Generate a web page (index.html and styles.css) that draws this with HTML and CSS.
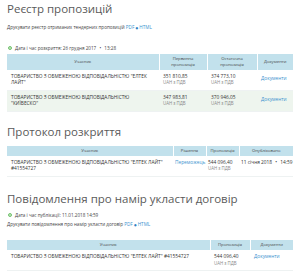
FILE: index.html
```html
<!DOCTYPE html>
<html lang="uk">
<head>
<meta charset="utf-8">
<link rel="stylesheet" href="styles.css">
</head>
<body>
<main class="page">
  <section class="block block-register">
    <h2 class="title">Реєстр пропозицій</h2>
    <p class="print">Друкувати реєстр отриманих тендерних пропозицій <a class="link" href="#">PDF</a> <span class="sep">●</span> <a class="link" href="#">HTML</a></p>
    <p class="date"><span class="status"></span>Дата і час розкриття: 26 грудня 2017 <span class="bull">•</span> 13:28</p>
    <table class="grid grid-register">
      <colgroup><col class="c1"><col class="c2"><col class="c3"><col class="c4"></colgroup>
      <thead>
        <tr><th>Учасник</th><th>Первинна<br>пропозиція</th><th>Остаточна<br>пропозиція</th><th>Документи</th></tr>
      </thead>
      <tbody>
        <tr>
          <td>ТОВАРИСТВО З ОБМЕЖЕНОЮ ВІДПОВІДАЛЬНІСТЮ "ЕЛТЕК ЛАЙТ"</td>
          <td>351 810,85<span class="vat">UAH з ПДВ</span></td>
          <td>374 773,10<span class="vat">UAH з ПДВ</span></td>
          <td class="mid"><a class="link" href="#">Документи</a></td>
        </tr>
        <tr class="alt">
          <td>ТОВАРИСТВО З ОБМЕЖЕНОЮ ВІДПОВІДАЛЬНІСТЮ "КИЇВЕСКО"</td>
          <td>347 983,81<span class="vat">UAH з ПДВ</span></td>
          <td>370 946,05<span class="vat">UAH з ПДВ</span></td>
          <td class="mid"><a class="link" href="#">Документи</a></td>
        </tr>
      </tbody>
    </table>
  </section>

  <section class="block block-protocol">
    <h2 class="title">Протокол розкриття</h2>
    <table class="grid grid-protocol">
      <colgroup><col class="c1"><col class="c2"><col class="c3"><col class="c4"></colgroup>
      <thead>
        <tr><th>Учасник</th><th>Рішення</th><th>Пропозиція</th><th>Опубліковано</th></tr>
      </thead>
      <tbody>
        <tr>
          <td>ТОВАРИСТВО З ОБМЕЖЕНОЮ ВІДПОВІДАЛЬНІСТЮ "ЕЛТЕК ЛАЙТ" #41554727</td>
          <td class="tight"><a class="link" href="#">Переможець</a></td>
          <td class="tight">544 096,40<span class="vat">UAH з ПДВ</span></td>
          <td class="tight nowrap">11 січня 2018 <span class="bull">•</span> 14:59</td>
        </tr>
      </tbody>
    </table>
  </section>

  <section class="block block-notice">
    <h2 class="title">Повідомлення про намір укласти договір</h2>
    <p class="date"><span class="status"></span>Дата і час публікації: 11.01.2018 14:59</p>
    <p class="print">Друкувати повідомлення про намір укласти договір <a class="link" href="#">PDF</a> <span class="sep">●</span> <a class="link" href="#">HTML</a></p>
    <table class="grid grid-notice">
      <colgroup><col class="c1"><col class="c2"><col class="c3"></colgroup>
      <thead>
        <tr><th>Учасник</th><th>Пропозиція</th><th>Документи</th></tr>
      </thead>
      <tbody>
        <tr>
          <td>ТОВАРИСТВО З ОБМЕЖЕНОЮ ВІДПОВІДАЛЬНІСТЮ "ЕЛТЕК ЛАЙТ" #41554727</td>
          <td>544 096,40<span class="vat">UAH з ПДВ</span></td>
          <td><a class="link" href="#">Документи</a></td>
        </tr>
      </tbody>
    </table>
  </section>
</main>
</body>
</html>
```
FILE: styles.css
```css
* { box-sizing: border-box; }
html, body { margin: 0; padding: 0; background: #fff; }
body {
  font-family: "Open Sans", "Noto Sans", "DejaVu Sans", sans-serif;
  color: #333;
  width: 300px;
  height: 279px;
  overflow: hidden;
}
.page { padding: 2px 7px 0 7px; }
.block { margin: 0; }
.title {
  margin: 0;
  font-size: 11.5px;
  line-height: 14px;
  font-weight: 400;
  color: #5a5a5a;
}
.print, .date {
  margin: 0;
  font-size: 4.6px;
  line-height: 7px;
  color: #444;
}
.block-register .print { margin-top: 8px; }
.block-register .date { margin-top: 13px; }
.status {
  display: inline-block;
  width: 4px;
  height: 4px;
  border-radius: 50%;
  border: 1px solid #74c26f;
  background: #bfe6bb;
  margin: 0 3px 0 1px;
  vertical-align: -0.5px;
}
.bull { margin: 0 2px; }
.sep { font-size: 3px; color: #2e7fc2; vertical-align: 0.5px; }
.link { color: #3b93cf; text-decoration: none; }
.grid {
  width: 286px;
  border-collapse: collapse;
  table-layout: fixed;
  font-size: 4.8px;
  line-height: 6.5px;
}
.grid th {
  background: #c2e1ec;
  font-weight: 400;
  font-size: 4.2px;
  line-height: 6px;
  color: #444;
  text-align: center;
  padding: 2px 3px;
  border-left: 1px solid #fff;
}
.grid th:first-child { border-left: 0; }
.grid td {
  text-align: left;
  vertical-align: top;
  padding: 3px 3px 4px 4px;
  color: #333;
  border-bottom: 1px solid #eef2f2;
}
.grid td.mid { vertical-align: middle; padding-bottom: 6px; }
.grid td.tight { padding-left: 2px; padding-right: 1px; }
.grid td.nowrap { white-space: nowrap; }
.grid tr.alt td { background: #eef5ee; }
.vat { display: block; color: #888; font-size: 4.4px; }
.grid-register { margin-top: 2px; }
.grid-register .c1 { width: 152px; }
.grid-register .c2 { width: 48px; }
.grid-register .c3 { width: 50px; }
.grid-register .c4 { width: 36px; }

.block-protocol { margin-top: 13px; }
.grid-protocol { margin-top: 7px; }
.grid-protocol .c1 { width: 166px; }
.grid-protocol .c2 { width: 33px; }
.grid-protocol .c3 { width: 33px; }
.grid-protocol .c4 { width: 54px; }

.block-notice { margin-top: 15px; }
.block-notice .date { margin-top: 6px; }
.block-notice .print { margin-top: 2px; }
.grid-notice { margin-top: 12px; }
.grid-notice .c1 { width: 203px; }
.grid-notice .c2 { width: 40px; }
.grid-notice .c3 { width: 43px; }
```
